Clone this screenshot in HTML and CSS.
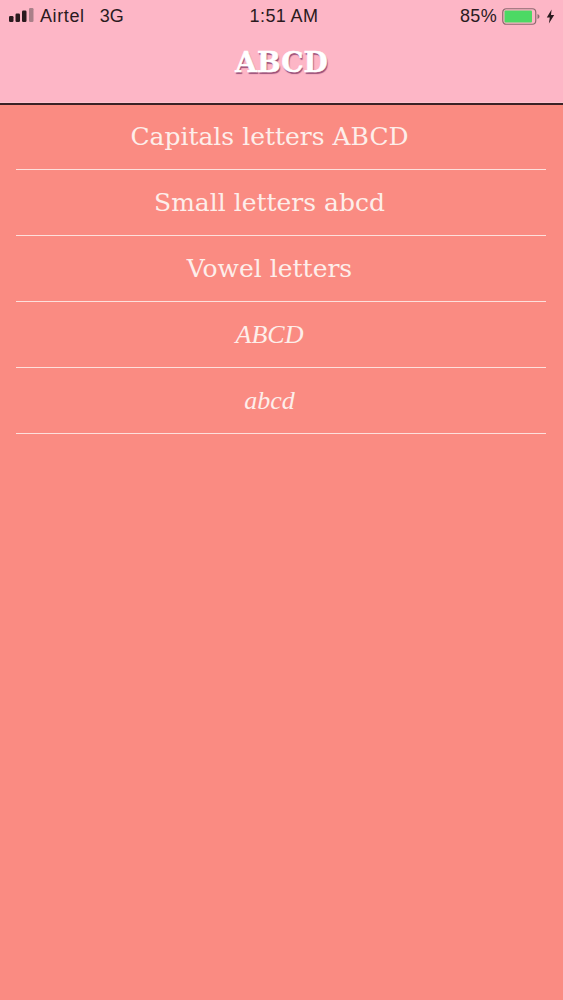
FILE: index.html
```html
<!DOCTYPE html>
<html lang="en">
<head>
    <meta charset="UTF-8">
    <meta name="viewport" content="width=device-width, initial-scale=1.0">
    <title>ABCD</title>
    <link rel="stylesheet" href="styles.css">
</head>
<body>
    <div class="header">
        <div class="status-bar">
            <div class="status-left">
                <svg class="signal" width="26" height="15" viewBox="0 0 26 15">
                    <rect x="0" y="8" width="4.5" height="6" rx="1.2" fill="#2a1a1e"/>
                    <rect x="6.5" y="5.5" width="4.5" height="8.5" rx="1.2" fill="#2a1a1e"/>
                    <rect x="13" y="2.5" width="4.5" height="11.5" rx="1.2" fill="#2a1a1e"/>
                    <rect x="20" y="0" width="4.5" height="14" rx="1.2" fill="#a98089"/>
                </svg>
                <span class="carrier">Airtel</span>
                <span class="network">3G</span>
            </div>
            <div class="status-time">1:51 AM</div>
            <div class="status-right">
                <span class="percent">85%</span>
                <svg class="battery" width="38" height="17" viewBox="0 0 38 17">
                    <rect x="0.75" y="0.75" width="33" height="15.5" rx="3.5" fill="none" stroke="#8d6a70" stroke-width="1.2"/>
                    <rect x="2.5" y="2.5" width="27.5" height="12" rx="1" fill="#4cd964"/>
                    <path d="M35.5 6v5c1.2-.4 2-1.4 2-2.5s-.8-2.1-2-2.5z" fill="#8d6a70"/>
                </svg>
                <svg class="bolt" width="9" height="15" viewBox="0 0 9 15">
                    <path d="M5.6 0.5L0.8 8.4h3L2.9 14.5l5.3-8.4h-3.2z" fill="#2a1a1e"/>
                </svg>
            </div>
        </div>
        <div class="title">ABCD</div>
    </div>

    <ul class="menu">
        <li>Capitals letters ABCD</li>
        <li>Small letters abcd</li>
        <li>Vowel letters</li>
        <li class="italic">ABCD</li>
        <li class="italic">abcd</li>
    </ul>
</body>
</html>
```

FILE: styles.css
```css
html, body {
    height: 100%;
}
body {
    margin: 0;
    padding: 0;
    background-color: #fa8b82;
    color: #fdeeea;
    font-family: "DejaVu Serif", serif;
    overflow: hidden;
}
.header {
    height: 103px;
    background-color: #fdb6c6;
    border-bottom: 2px solid #3a2226;
    box-shadow: inset 0 -1px 0 #fbc4d0;
}
.status-bar {
    height: 32px;
    padding: 0 8px 0 9px;
    display: grid;
    grid-template-columns: 1fr auto 1fr;
    align-items: center;
    color: #2a1a1e;
    font-family: "Liberation Sans", sans-serif;
    font-size: 18px;
}
.status-left {
    display: flex;
    align-items: center;
}
.signal {
    margin-right: 5px;
    margin-top: -2px;
}
.carrier {
    letter-spacing: 0.6px;
    margin-right: 15px;
}
.status-time {
    letter-spacing: 0.4px;
    padding-left: 4px;
}
.status-right {
    display: flex;
    align-items: center;
    justify-content: flex-end;
    gap: 5px;
}
.percent {
    letter-spacing: 0.3px;
}
.battery {
    margin-right: 1px;
}
.title {
    text-align: center;
    font-size: 28px;
    font-weight: bold;
    color: #ffffff;
    line-height: 62px;
    -webkit-text-stroke: 0.5px #ffffff;
    text-shadow: 1px 2px 1px #9a4f78;
}
.menu {
    list-style: none;
    margin: 0;
    padding: 0 17px 0 16px;
}
.menu li {
    height: 65px;
    line-height: 66px;
    padding-right: 23px;
    text-align: center;
    font-size: 25px;
    border-bottom: 1px solid #fde0dc;
}
.menu li:first-child {
    height: 64px;
    line-height: 64px;
}
.menu .italic {
    font-family: "Liberation Serif", serif;
    font-style: italic;
    font-size: 26px;
}
```
